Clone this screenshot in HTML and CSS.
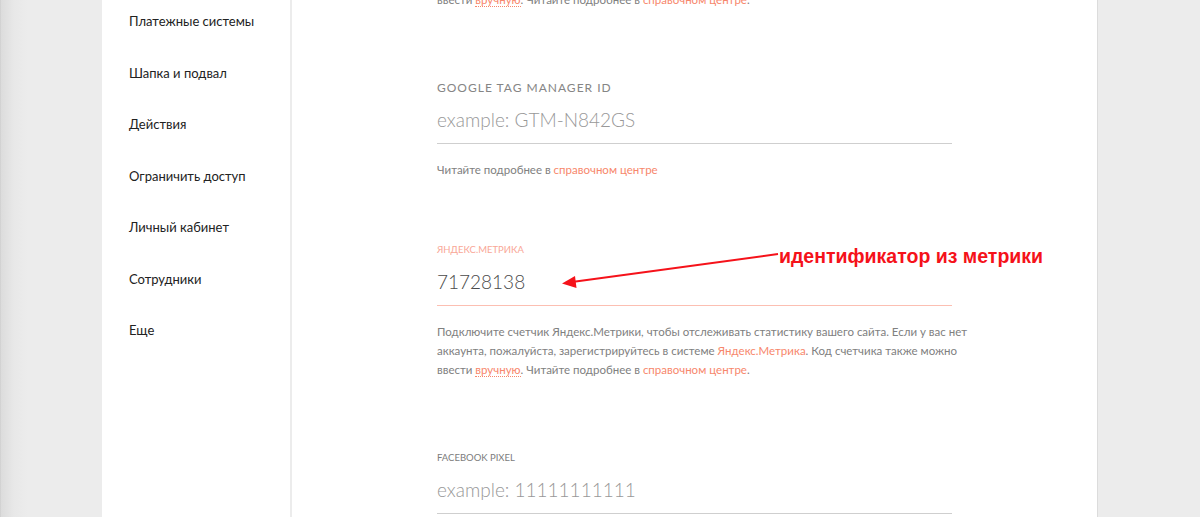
FILE: index.html
```html
<!DOCTYPE html>
<html lang="ru">
<head>
    <meta charset="UTF-8">
    <title>Настройки сайта</title>
    <link rel="stylesheet" href="styles.css">
</head>
<body>
    <div class="page">
        <div class="panel">
            <ul class="sidebar">
                <li>Платежные системы</li>
                <li>Шапка и подвал</li>
                <li>Действия</li>
                <li>Ограничить доступ</li>
                <li>Личный кабинет</li>
                <li>Сотрудники</li>
                <li>Еще</li>
            </ul>

            <div class="main">
                <p class="hint">ввести <a class="dotted" href="#">вручную</a>. Читайте подробнее в <a href="#">справочном центре</a>.</p>

                <div class="field">
                    <label class="field-label label-big" for="gtm">Google Tag Manager ID</label>
                    <input class="field-input" type="text" id="gtm" placeholder="example: GTM-N842GS">
                    <p class="hint">Читайте подробнее в <a href="#">справочном центре</a></p>
                </div>

                <div class="field field-near active">
                    <label class="field-label" for="ym">Яндекс.Метрика</label>
                    <input class="field-input" type="text" id="ym" value="71728138">
                    <p class="hint">
                        Подключите счетчик Яндекс.Метрики, чтобы отслеживать статистику вашего сайта. Если у вас нет<br>
                        аккаунта, пожалуйста, зарегистрируйтесь в системе <a href="#">Яндекс.Метрика</a>. Код счетчика также можно<br>
                        ввести <a class="dotted" href="#">вручную</a>. Читайте подробнее в <a href="#">справочном центре</a>.
                    </p>
                </div>

                <div class="field">
                    <label class="field-label" for="fb">Facebook Pixel</label>
                    <input class="field-input" type="text" id="fb" placeholder="example: 11111111111">
                </div>
            </div>
        </div>
    </div>

    <!-- annotation on top of the screenshot -->
    <svg class="arrow" width="1200" height="517" viewBox="0 0 1200 517">
        <line x1="778" y1="254" x2="572" y2="282" stroke="#f5121a" stroke-width="2"/>
        <polygon points="562,283.5 575,276 576.5,288" fill="#f5121a"/>
    </svg>
    <div class="note">идентификатор из метрики</div>
</body>
</html>
```

FILE: styles.css
```css
* {
    margin: 0;
    padding: 0;
    box-sizing: border-box;
}

body {
    font-family: 'Lato', 'Noto Sans', sans-serif;
    background: #ececec;
    height: 517px;
    overflow: hidden;
}

.page {
    height: 100%;
    padding-left: 102px;
    background: linear-gradient(90deg, #c9c9c9 0px, #dcdcdc 1px, #e8e8e8 14px, #ececec 28px, #ececec 100%);
}

.panel {
    display: flex;
    width: 996px;
    height: 100%;
    background: white;
    border-right: 1px solid #dcdcdc;
}

/* Sidebar */
.sidebar {
    list-style: none;
    width: 190px;
    flex-shrink: 0;
    border-right: 2px solid #ececec;
    margin-top: -4px;
    padding-left: 27px;
}

.sidebar li {
    height: 51.5px;
    line-height: 51.5px;
    font-size: 13px;
    color: #222;
}

/* Main column */
.main {
    flex: 1;
    margin-top: -10px;
    padding-left: 145px;
}

.hint {
    font-size: 11.5px;
    line-height: 19px;
    color: #808080;
}

.hint a {
    color: #f7876c;
    text-decoration: none;
}

.hint a.dotted {
    border-bottom: 1px dotted #f7876c;
}

.field {
    margin-top: 71px;
}

.field-near {
    margin-top: 63px;
}

.field-label {
    display: block;
    font-size: 9.5px;
    line-height: 16px;
    text-transform: uppercase;
    color: #7c7c7c;
}

.label-big {
    font-size: 12px;
    letter-spacing: 1px;
    color: #858585;
}

.field-input {
    display: block;
    width: 515px;
    margin-top: 8px;
    padding: 4px 0 11px;
    border: none;
    border-bottom: 1px solid #cfcfcf;
    font-family: inherit;
    font-size: 19px;
    font-weight: 300;
    line-height: 24px;
    color: #4a4a4a;
    outline: none;
}

.field-input::placeholder {
    color: #989898;
}

.field .hint {
    margin-top: 16px;
}

.active .field-label {
    color: #f9a797;
}

.active .field-input {
    border-bottom-color: #fcbfb2;
}

/* Annotation */
.arrow {
    position: absolute;
    left: 0;
    top: 0;
    pointer-events: none;
}

.note {
    position: absolute;
    left: 779px;
    top: 245px;
    font-family: 'Liberation Sans', Arial, sans-serif;
    font-size: 19.5px;
    font-weight: bold;
    line-height: 22px;
    color: #f5121a;
}
```
